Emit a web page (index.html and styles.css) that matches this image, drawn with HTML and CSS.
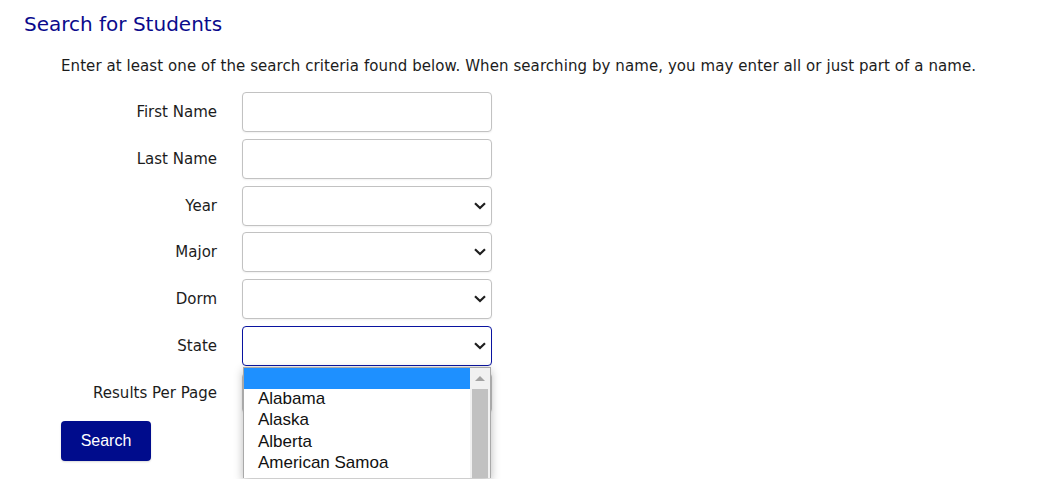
FILE: index.html
```html
<!DOCTYPE html>
<html lang="en">
<head>
<meta charset="utf-8">
<title>Search for Students</title>
<link rel="stylesheet" href="styles.css">
</head>
<body>
<main class="page">
  <h1 class="title">Search for Students</h1>
  <p class="intro">Enter at least one of the search criteria found below. When searching by name, you may enter all or just part of a name.</p>
  <form class="search-form">
    <label class="label">First Name</label>
    <div class="field"><div class="input"></div></div>

    <label class="label">Last Name</label>
    <div class="field"><div class="input"></div></div>

    <label class="label">Year</label>
    <div class="field"><div class="input select"><svg class="chev" width="12" height="8" viewBox="0 0 12 8"><path d="M1 1.2 L6 6 L11 1.2" fill="none" stroke="#1f1f1f" stroke-width="2.2"/></svg></div></div>

    <label class="label">Major</label>
    <div class="field"><div class="input select"><svg class="chev" width="12" height="8" viewBox="0 0 12 8"><path d="M1 1.2 L6 6 L11 1.2" fill="none" stroke="#1f1f1f" stroke-width="2.2"/></svg></div></div>

    <label class="label">Dorm</label>
    <div class="field"><div class="input select"><svg class="chev" width="12" height="8" viewBox="0 0 12 8"><path d="M1 1.2 L6 6 L11 1.2" fill="none" stroke="#1f1f1f" stroke-width="2.2"/></svg></div></div>

    <label class="label">State</label>
    <div class="field field-open">
      <div class="input select focused"><svg class="chev" width="12" height="8" viewBox="0 0 12 8"><path d="M1 1.2 L6 6 L11 1.2" fill="none" stroke="#1f1f1f" stroke-width="2.2"/></svg></div>
      <div class="popup">
        <ul class="options">
          <li class="opt selected">&nbsp;</li>
          <li class="opt">Alabama</li>
          <li class="opt">Alaska</li>
          <li class="opt">Alberta</li>
          <li class="opt">American Samoa</li>
          <li class="opt">Arizona</li>
        </ul>
        <div class="scrollbar">
          <div class="scroll-up"><span class="tri"></span></div>
          <div class="thumb"></div>
        </div>
      </div>
    </div>

    <label class="label">Results Per Page</label>
    <div class="field"><div class="input select"><svg class="chev" width="12" height="8" viewBox="0 0 12 8"><path d="M1 1.2 L6 6 L11 1.2" fill="none" stroke="#1f1f1f" stroke-width="2.2"/></svg></div></div>

    <div class="actions"><button type="button" class="btn">Search</button></div>
  </form>
</main>
</body>
</html>
```
FILE: styles.css
```css
html, body {
  margin: 0;
  padding: 0;
  background: #ffffff;
}

body {
  font-family: "DejaVu Sans", Verdana, sans-serif;
  color: #1c1c1c;
  min-height: 479px;
}

.page {
  padding: 12px 0 0 24px;
}

.title {
  margin: 0;
  font-size: 20px;
  line-height: 24px;
  font-weight: normal;
  color: #0a0a8c;
}

.intro {
  margin: 19.5px 0 0 37px;
  font-size: 15px;
  line-height: 20px;
  letter-spacing: 0.075px;
}

.search-form {
  margin: 16.5px 0 0 37px;
  display: grid;
  grid-template-columns: 156px 250px;
  grid-auto-rows: 40px;
  column-gap: 25px;
  row-gap: 6.8px;
  align-items: center;
}

.label {
  text-align: right;
  font-size: 15px;
  line-height: 20px;
}

.field {
  height: 40px;
}

.field-open {
  position: relative;
  z-index: 2;
}

.input {
  box-sizing: border-box;
  height: 40px;
  width: 250px;
  border: 1px solid #c2c2c2;
  border-radius: 4px;
  background: #fff;
  box-shadow: 0 1px 2px rgba(0, 0, 0, 0.06);
}

.select {
  display: flex;
  align-items: center;
  justify-content: flex-end;
  padding-right: 5px;
}

.chev {
  display: block;
}

.focused {
  border-color: #0a14a0;
}

.popup {
  position: absolute;
  top: 41px;
  left: 1px;
  width: 248px;
  height: 111px;
  box-sizing: border-box;
  border: 1px solid #a9a9a9;
  border-bottom: none;
  background: #fff;
  box-shadow: 0 3px 9px rgba(0, 0, 0, 0.28);
  display: flex;
  overflow: hidden;
}

.options {
  list-style: none;
  margin: 0;
  padding: 0;
  flex: 1;
  font-family: "Liberation Sans", Arial, sans-serif;
  font-size: 17px;
  color: #111;
}

.opt {
  height: 21.5px;
  line-height: 20px;
  padding-left: 14px;
  white-space: nowrap;
}

.opt.selected {
  height: 21px;
  background: #1e90ff;
}

.scrollbar {
  width: 20px;
  background: #f1f1f1;
  display: flex;
  flex-direction: column;
  align-items: center;
}

.scroll-up {
  height: 21px;
  width: 100%;
  display: flex;
  align-items: center;
  justify-content: center;
}

.tri {
  width: 0;
  height: 0;
  border-left: 5px solid transparent;
  border-right: 5px solid transparent;
  border-bottom: 5px solid #a3a3a3;
}

.thumb {
  width: 16px;
  flex: 1;
  background: #c1c1c1;
}

.actions {
  grid-column: 1 / 2;
  align-self: start;
  margin-top: 1px;
  height: 40px;
}

.btn {
  box-sizing: border-box;
  width: 90px;
  height: 40px;
  border: none;
  border-radius: 4px;
  background: #000c8c;
  color: #fff;
  font-family: "Liberation Sans", Arial, sans-serif;
  font-size: 16px;
  padding: 0;
  box-shadow: 0 1px 2px rgba(0, 0, 0, 0.15);
}
```
